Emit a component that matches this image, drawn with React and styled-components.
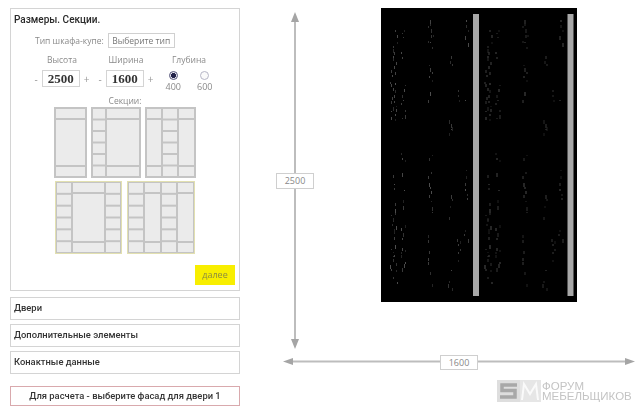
import styled, { createGlobalStyle } from 'styled-components'

const GlobalStyle = createGlobalStyle`
  html, body { margin: 0; padding: 0; background: #fff; }
  body { width: 640px; height: 410px; overflow: hidden; font-family: "Open Sans", sans-serif; }
`

const Page = styled.div`
  display: flex;
  width: 640px;
  height: 410px;
  padding: 8px 0 0 10px;
  box-sizing: border-box;
  filter: blur(0.35px);
`

const Sidebar = styled.div`
  width: 230px;
  flex: none;
  display: flex;
  flex-direction: column;
`

const Panel = styled.div`
  height: 283px;
  box-sizing: border-box;
  border: 1px solid #d4d4d4;
  padding: 4px 3px;
  display: flex;
  flex-direction: column;
`

const Title = styled.div`
  font-family: Roboto, sans-serif;
  font-size: 10px;
  font-weight: 500;
  line-height: 13px;
  color: #2a2a2a;
`

const TypeRow = styled.div`
  display: flex;
  align-items: center;
  margin: 7px 0 0 21px;
  gap: 4px;
  font-size: 8.5px;
  color: #8a8a8a;
`

const TypeBox = styled.div`
  width: 65px;
  height: 13px;
  border: 1px solid #d0d0d0;
  font-size: 8.5px;
  line-height: 13px;
  text-align: center;
  color: #777;
`

const Sizes = styled.div`
  display: flex;
  margin-top: 6px;
  padding-left: 16px;
`

const SizeField = styled.div`
  width: 64px;
  display: flex;
  flex-direction: column;
  align-items: center;
  font-size: 8.5px;
  line-height: 12px;
  color: #8a8a8a;
`

const Stepper = styled.div`
  display: flex;
  align-items: center;
  gap: 4px;
  margin-top: 4px;
`

const Sign = styled.span`
  font-size: 10px;
  color: #999;
`

const NumberBox = styled.div`
  width: 36px;
  height: 15px;
  border: 1px solid #d4d4d4;
  font-family: "Liberation Serif", serif;
  font-size: 13px;
  font-weight: 700;
  line-height: 15px;
  text-align: center;
  color: #333;
`

const Depth = styled.div`
  display: flex;
  flex-direction: column;
  align-items: center;
  width: 58px;
  margin-left: 2px;
  font-size: 8.5px;
  line-height: 12px;
  color: #8a8a8a;
`

const DepthOptions = styled.div`
  display: flex;
  gap: 16px;
  margin-top: 5px;
`

const DepthOption = styled.div`
  display: flex;
  flex-direction: column;
  align-items: center;
  line-height: 11px;
  font-size: 9px;
`

const Radio = styled.span`
  width: 9px;
  height: 9px;
  border-radius: 50%;
  box-sizing: border-box;
  border: 1px solid ${p => (p.$on ? '#55557a' : '#b5b5c5')};
  background: ${p => (p.$on ? 'radial-gradient(#23234a 45%, #e8e8f0 55%)' : '#fafafa')};
  margin-bottom: 1px;
`

const SectionsLabel = styled.div`
  margin-top: 3px;
  font-size: 8.5px;
  line-height: 11px;
  color: #8a8a8a;
  text-align: center;
`

const ThumbRow = styled.div`
  display: flex;
  gap: ${p => p.$gap}px;
  margin-left: ${p => p.$left}px;
  margin-top: ${p => p.$top}px;
`

const NextRow = styled.div`
  display: flex;
  justify-content: flex-end;
  margin-top: auto;
  margin-bottom: 1px;
  padding-right: 1px;
`

const NextButton = styled.div`
  width: 40px;
  height: 20px;
  background: #f8ee00;
  font-size: 9px;
  line-height: 20px;
  text-align: center;
  color: #8a8a40;
`

const Row = styled.div`
  height: 23px;
  box-sizing: border-box;
  border: 1px solid #d4d4d4;
  margin-top: ${p => p.$top}px;
  padding-left: 3px;
  font-family: Roboto, sans-serif;
  font-size: 9.4px;
  font-weight: 500;
  line-height: 19px;
  color: #333;
`

const Notice = styled.div`
  height: 20px;
  box-sizing: border-box;
  margin-top: 12px;
  border: 1px solid #d9a9ad;
  font-family: Roboto, sans-serif;
  font-size: 9.4px;
  font-weight: 500;
  line-height: 18px;
  text-align: center;
  color: #333;
`

const Canvas = styled.div`
  position: relative;
  flex: 1;
`

const Drawing = styled.svg`
  position: absolute;
  left: 10px;
  top: -8px;
`

const DimLabel = styled.div`
  position: absolute;
  left: ${p => p.$x}px;
  top: ${p => p.$y}px;
  width: 36px;
  height: ${p => p.$h}px;
  border: 1px solid #cfcfcf;
  background: #fff;
  font-size: 9px;
  line-height: ${p => p.$h}px;
  text-align: center;
  color: #888;
`

const Logo = styled.div`
  position: absolute;
  left: 257px;
  top: 372px;
  display: flex;
  align-items: center;
  gap: 1px;
`

const LogoText = styled.div`
  font-family: "Liberation Sans", sans-serif;
  font-size: 11.5px;
  line-height: 10px;
  white-space: nowrap;
  color: #c4c4c4;
`

const LogoLine = styled.div`
  height: 10px;
  overflow: visible;
`

// b = band + tall door + band, c = six equal drawers
const THUMBS = [
  { w: 33, h: 71, cols: [[29, 'b']] },
  { w: 50, h: 71, cols: [[12, 'c'], [32, 'b']] },
  { w: 51, h: 71, cols: [[14, 'b'], [14, 'c'], [15, 'b']] },
  { w: 67, h: 73, cols: [[14, 'c'], [31, 'b'], [14, 'c']], lit: true },
  { w: 68, h: 73, cols: [[14, 'c'], [15, 'b'], [14, 'c'], [15, 'b']], lit: true },
]

const cellsFor = (kind, h) => {
  if (kind === 'c') {
    const ch = (h - 4 - 10) / 6
    return [0, 1, 2, 3, 4, 5].map(i => [2 + i * (ch + 2), ch])
  }
  return [[2, 9], [13, h - 26], [h - 11, 9]]
}

const Thumb = ({ w, h, cols, lit }) => {
  let x = 2
  const rects = []
  cols.forEach(([cw, kind], c) => {
    cellsFor(kind, h).forEach(([y, ch], i) => {
      rects.push(<rect key={c + '-' + i} x={x} y={y} width={cw} height={ch} fill="#ebebeb" />)
    })
    x += cw + 2
  })
  return (
    <svg width={w} height={h} style={{ display: 'block', flex: 'none' }}>
      <rect width={w} height={h} fill="#c4c4c4" />
      {lit && <rect x="0.5" y="0.5" width={w - 1} height={h - 1} fill="none" stroke="#e2e0b0" />}
      {rects}
    </svg>
  )
}

// door texture: broken vertical streaks, the same on both doors
const STREAKS = [
  [14, 0.55, [[30, 120], [175, 285]]],
  [11, 0.35, [[70, 120], [215, 270]]],
  [22, 0.4, [[30, 60], [85, 125], [150, 210], [225, 270]]],
  [49, 0.4, [[20, 50], [60, 110], [155, 215], [235, 290]]],
  [50, 0.2, [[30, 50]]],
  [69, 0.45, [[50, 70], [120, 135], [195, 220], [270, 290]]],
  [85, 0.45, [[20, 45], [100, 115], [170, 205], [230, 250]]],
  [78, 0.25, [[90, 110], [235, 262]]],
]

const makeSpecks = () => {
  let seed = 17
  const rnd = () => {
    seed = (seed * 1103 + 12345) % 65536
    return seed / 65536
  }
  const specks = []
  STREAKS.forEach(([x, density, spans]) => {
    spans.forEach(([from, to]) => {
      for (let y = from; y < to; y += 2 + Math.round(rnd() * 5)) {
        if (rnd() > density + 0.35) continue
        specks.push({
          x: x + Math.round((rnd() - 0.5) * 5),
          y,
          h: 1 + Math.round(rnd() * 3),
          c: Math.round(30 + rnd() * 50),
        })
      }
    })
  })
  return specks
}

const SPECKS = makeSpecks()

const App = () => {
  return (
    <Page>
      <GlobalStyle />
      <Sidebar>
        <Panel>
          <Title>Размеры. Секции.</Title>
          <TypeRow>
            Тип шкафа-купе:
            <TypeBox>Выберите тип</TypeBox>
          </TypeRow>
          <Sizes>
            <SizeField>
              Высота
              <Stepper><Sign>-</Sign><NumberBox>2500</NumberBox><Sign>+</Sign></Stepper>
            </SizeField>
            <SizeField>
              Ширина
              <Stepper><Sign>-</Sign><NumberBox>1600</NumberBox><Sign>+</Sign></Stepper>
            </SizeField>
            <Depth>
              Глубина
              <DepthOptions>
                <DepthOption><Radio $on />400</DepthOption>
                <DepthOption><Radio />600</DepthOption>
              </DepthOptions>
            </Depth>
          </Sizes>
          <SectionsLabel>Секции:</SectionsLabel>
          <ThumbRow $gap={4} $left={40} $top={1}>
            {THUMBS.slice(0, 3).map((t, i) => <Thumb key={i} {...t} />)}
          </ThumbRow>
          <ThumbRow $gap={5} $left={41} $top={3}>
            {THUMBS.slice(3).map((t, i) => <Thumb key={i} {...t} />)}
          </ThumbRow>
          <NextRow><NextButton>далее</NextButton></NextRow>
        </Panel>
        <Row $top={6}>Двери</Row>
        <Row $top={4}>Дополнительные элементы</Row>
        <Row $top={4}>Конактные данные</Row>
        <Notice>Для расчета - выберите фасад для двери 1</Notice>
      </Sidebar>
      <Canvas>
        <Drawing width="390" height="410">
          <g stroke="#bdbdbd" strokeWidth="2">
            <line x1="45" y1="20" x2="45" y2="340" />
            <line x1="40" y1="361.5" x2="378" y2="361.5" />
          </g>
          <g fill="#a5a5a5">
            <polygon points="45,12 41,22 49,22" />
            <polygon points="45,349 41,339 49,339" />
            <polygon points="33,361.5 43,358 43,365" />
            <polygon points="385,361.5 375,358 375,365" />
          </g>
          <rect x="131" y="8" width="196" height="294" fill="#000" />
          {[0, 94.5].map(dx => (
            <g key={dx}>
              {SPECKS.map((s, i) => (
                <rect key={i} x={131 + dx + s.x} y={s.y} width="1" height={s.h} fill={`rgb(${s.c},${s.c},${s.c})`} />
              ))}
              <rect x={223 + dx} y="14" width="6" height="282" fill="#a8a8a8" />
            </g>
          ))}
        </Drawing>
        <DimLabel $x={36} $y={165} $h={14}>2500</DimLabel>
        <DimLabel $x={200} $y={347} $h={13}>1600</DimLabel>
        <Logo>
          <svg width="44" height="22" viewBox="0 0 44 22">
            <rect width="23" height="22" fill="#dedede" />
            <path d="M20 5 H5 V10.5 H18 V17 H3" fill="none" stroke="#a8a8a8" strokeWidth="3.5" />
            <rect x="23" width="21" height="22" fill="#e6e6e6" />
            <path d="M25 20 L27 4 L33 14 L39 4 L41 20" fill="none" stroke="#fafafa" strokeWidth="2" />
          </svg>
          <LogoText>
            <LogoLine>ФОРУМ</LogoLine>
            <LogoLine>МЕБЕЛЬЩИКОВ</LogoLine>
          </LogoText>
        </Logo>
      </Canvas>
    </Page>
  )
}

export default App
